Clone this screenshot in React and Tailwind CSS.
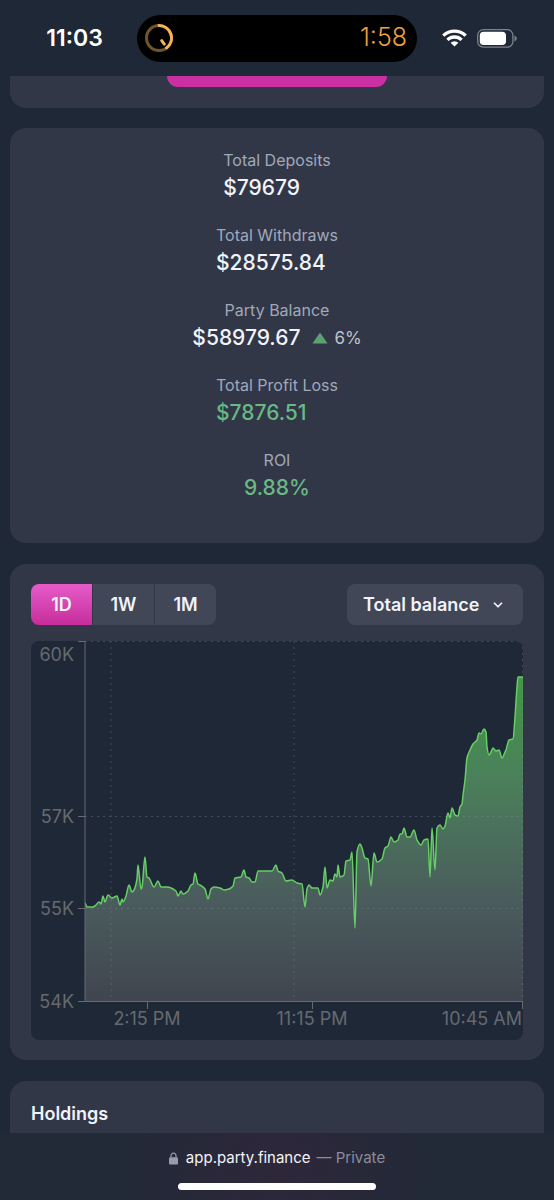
import { FiChevronDown } from 'react-icons/fi';

const stats = [
    { label: 'Total Deposits', value: '$79679' },
    { label: 'Total Withdraws', value: '$28575.84' },
    { label: 'Party Balance', value: '$58979.67', change: '6%', align: 'items-center' },
    { label: 'Total Profit Loss', value: '$7876.51', color: 'text-[#68b984]' },
    { label: 'ROI', value: '9.88%', color: 'text-[#68b984]', align: 'items-center' }
];

const ranges = ['1D', '1W', '1M'];

const yTicks = [
    { y: 0, label: '60K', labelY: 20 },
    { y: 175, label: '57K', labelY: 182 },
    { y: 267, label: '55K', labelY: 274 },
    { y: 360, label: '54K', labelY: 367 }
];

const xTicks = [
    { x: 116, label: '2:15 PM', anchor: 'middle' },
    { x: 281, label: '11:15 PM', anchor: 'middle' },
    { x: 491, label: '10:45 AM', anchor: 'end' }
];

const balance = [
    [54, 262], [56, 266], [62, 266], [65, 264], [68, 261], [70, 263], [72, 255], [74, 261],
    [77, 254], [81, 257], [86, 255], [89, 264], [91, 258], [92, 261], [95, 255], [98, 244],
    [101, 251], [103, 249], [106, 238], [107, 224], [110, 248], [111, 246], [114, 216],
    [116, 236], [118, 237], [123, 246], [127, 240], [130, 246], [136, 246], [145, 250],
    [147, 255], [150, 250], [152, 253], [157, 250], [160, 244], [162, 243], [164, 232],
    [167, 243], [169, 244], [174, 248], [177, 258], [180, 248], [183, 246], [189, 247],
    [193, 249], [198, 248], [202, 245], [204, 237], [210, 236], [213, 229], [215, 236],
    [218, 237], [221, 241], [224, 241], [227, 230], [241, 230], [245, 224], [247, 230],
    [251, 232], [255, 240], [261, 239], [266, 242], [271, 243], [274, 266], [276, 248],
    [278, 244], [281, 247], [287, 247], [289, 254], [292, 246], [294, 226], [296, 247],
    [299, 239], [302, 240], [304, 233], [306, 236], [307, 224], [309, 236], [313, 234],
    [315, 220], [319, 219], [321, 211], [324, 287], [326, 211], [329, 203], [331, 207],
    [334, 217], [337, 218], [340, 245], [343, 212], [346, 221], [351, 218], [354, 207],
    [357, 205], [360, 196], [363, 201], [367, 199], [369, 193], [371, 193], [373, 187],
    [376, 196], [379, 196], [383, 189], [386, 199], [390, 204], [393, 199], [397, 198],
    [399, 236], [401, 187], [404, 229], [406, 187], [409, 184], [412, 188], [414, 185],
    [417, 172], [419, 177], [421, 167], [424, 174], [427, 175], [429, 166], [431, 163],
    [432, 154], [434, 139], [436, 117], [439, 109], [442, 103], [446, 99], [448, 92],
    [450, 93], [453, 88], [455, 91], [456, 106], [458, 114], [460, 111], [462, 107],
    [465, 110], [468, 109], [471, 117], [474, 111], [475, 109], [478, 99], [482, 98],
    [484, 76], [486, 46], [487, 36], [492, 36]
];

// Monotone cubic through the points, so peaks never overshoot
const toPath = (points) => {
    const slope = (i) => (points[i + 1][1] - points[i][1]) / (points[i + 1][0] - points[i][0]);
    const tangents = points.map((_, i) => {
        if (i === 0 || i === points.length - 1) return 0;
        const a = slope(i - 1);
        const b = slope(i);
        return a * b <= 0 ? 0 : (2 * a * b) / (a + b);
    });

    let d = `M${points[0][0]},${points[0][1]}`;
    for (let i = 1; i < points.length; i++) {
        const [x0, y0] = points[i - 1];
        const [x1, y1] = points[i];
        const dx = (x1 - x0) / 3;
        d += `C${x0 + dx},${y0 + dx * tangents[i - 1]},${x1 - dx},${y1 - dx * tangents[i]},${x1},${y1}`;
    }
    return d;
};

const StatusBar = () => (
    <header className="grid h-[76px] shrink-0 grid-cols-[1fr_280px_1fr] items-center">

        <span className="pl-3 text-center text-[23px] font-semibold text-white">11:03</span>

        <div className="flex h-[47px] items-center justify-between rounded-full bg-black pl-2 pr-2.5">
            <svg width="28" height="28" viewBox="0 0 28 28" fill="none" strokeWidth="3">
                <circle cx="14" cy="14" r="12.5" stroke="#70552a" />
                <path d="M14 1.5A12.5 12.5 0 0 1 21.6 23.9" stroke="#f7b456" strokeLinecap="round" />
                <path d="M16.7 16.7l2.6 3.4" stroke="#f7b456" strokeLinecap="round" />
            </svg>
            <span className="text-[25px] font-light text-[#f0a13a]">1:58</span>
        </div>

        <div className="flex items-center justify-center gap-2.5 pr-3">
            <svg width="25" height="18" viewBox="0 0 25 18" fill="none" stroke="#fff" strokeWidth="3.3">
                <path d="M1.3 6.6a16 16 0 0 1 22.4 0" />
                <path d="M5.4 10.9a10.2 10.2 0 0 1 14.2 0" />
                <path d="M12.5 17.6l-3.9-3.8a5.6 5.6 0 0 1 7.8 0z" fill="#fff" stroke="none" />
            </svg>
            <svg width="40" height="19" viewBox="0 0 40 19">
                <rect x="0.7" y="0.7" width="35.2" height="17.4" rx="5.6" fill="none" stroke="#7d828b" strokeWidth="1.3" />
                <rect x="2.8" y="2.8" width="26.2" height="13.2" rx="3.8" fill="#fff" />
                <path d="M37.5 6.4q2.3 1 2.3 3t-2.3 3z" fill="#7d828b" />
            </svg>
        </div>

    </header>
);

const Stat = ({ label, value, change, color = 'text-[#f1f3fa]', align = 'items-start' }) => (
    <div className={`flex flex-col ${align}`}>
        <dt className="text-base leading-6 text-[#a0a8ba]">{label}</dt>
        <dd className={`flex items-center text-[21px] leading-8 font-medium ${color}`}>
            {value}
            {change && (
                <span className="ml-3 flex items-center gap-1.5 text-[17px] font-normal text-[#bfc3cc]">
                    <svg width="16" height="12" viewBox="0 0 16 12">
                        <path d="M8 0.5l7.5 11h-15z" fill="#5da173" />
                    </svg>
                    {change}
                </span>
            )}
        </dd>
    </div>
);

const BalanceChart = () => {

    const line = toPath(balance);

    return (
        <svg
            className="block h-auto w-full rounded-lg bg-[#1f2836]"
            viewBox="0 0 492 399"
            role="img"
            aria-label="Total balance over one day"
        >
            <defs>
                <linearGradient id="balanceFill" x1="0" y1="36" x2="0" y2="360" gradientUnits="userSpaceOnUse">
                    <stop offset="0" stopColor="#449846" />
                    <stop offset="0.3" stopColor="#4a815a" />
                    <stop offset="0.7" stopColor="#4a5b5d" />
                    <stop offset="1" stopColor="#40454f" />
                </linearGradient>
            </defs>

            <path d={`${line}V360H54Z`} fill="url(#balanceFill)" />

            {/* Grid */}
            <g stroke="#8a93a0" strokeOpacity="0.32" strokeDasharray="2 4">
                <path d="M54 0.5H492M54 175.5H492M54 267.5H492M80 0V360M263 0V360M491.5 0V360" />
            </g>

            <path d={line} fill="none" stroke="#67ce65" strokeWidth="1.5" strokeLinejoin="round" />

            {/* Axes */}
            <path d="M54 0V360M54 360.5H492" fill="none" stroke="#666b73" />

            <g fontFamily="Inter, sans-serif" fontSize="18" fill="#666a70">
                {yTicks.map((tick) => (
                    <g key={tick.label}>
                        <path d={`M47 ${tick.y + 0.5}h7`} stroke="#666b73" />
                        <text x="43" y={tick.labelY} textAnchor="end">{tick.label}</text>
                    </g>
                ))}
                {xTicks.map((tick) => (
                    <g key={tick.label}>
                        <path d={`M${tick.x + 0.5} 361v7`} stroke="#666b73" />
                        <text x={tick.x} y="384" textAnchor={tick.anchor}>{tick.label}</text>
                    </g>
                ))}
            </g>
        </svg>
    );

};

const App = () => {

    return (

        <div className="flex h-screen flex-col bg-[#1f2836] font-['Inter',sans-serif]">

            <StatusBar />

            <main className="flex min-h-0 flex-1 flex-col gap-[21px] overflow-y-auto px-2.5 [scrollbar-width:none]">

                <section className="-mb-px h-8 shrink-0 rounded-b-2xl bg-[#313747]">
                    <button
                        type="button"
                        aria-label="Deposit"
                        className="mx-auto block h-[11px] w-[220px] rounded-b-xl bg-[#cb30a2]"
                    />
                </section>

                {/* Party totals */}
                <section className="shrink-0 rounded-2xl bg-[#313747] pt-5 pb-[39px]">
                    <dl className="flex flex-col items-center gap-[19px]">
                        {stats.map((stat) => (
                            <Stat key={stat.label} {...stat} />
                        ))}
                    </dl>
                </section>

                {/* Chart */}
                <section className="flex shrink-0 flex-col gap-4 rounded-2xl bg-[#313747] px-[21px] py-5">

                    <div className="flex items-center justify-between">

                        <div className="flex gap-px overflow-hidden rounded-lg">
                            {ranges.map((range) => (
                                <button
                                    key={range}
                                    type="button"
                                    className={`h-[41px] w-[61px] text-lg font-semibold text-[#f1f3fa]
                                    ${range === '1D'
                                            ? 'bg-linear-to-b from-[#e65bc9] to-[#c62c9b]'
                                            : 'bg-[#414757]'
                                        }`}
                                >
                                    {range}
                                </button>
                            ))}
                        </div>

                        <div className="relative">
                            <select
                                aria-label="Chart value"
                                className="h-[41px] w-44 appearance-none rounded-lg bg-[#414757] pl-4 text-lg font-semibold text-[#f1f3fa]"
                            >
                                <option>Total balance</option>
                            </select>
                            <FiChevronDown
                                size={14}
                                strokeWidth={3}
                                className="pointer-events-none absolute top-3.5 right-[18px] text-[#f1f3fa]"
                            />
                        </div>

                    </div>

                    <BalanceChart />

                </section>

                <section className="min-h-[120px] shrink-0 rounded-2xl bg-[#313747] p-[21px]">
                    <h2 className="text-lg leading-6 font-semibold text-[#f1f3fa]">Holdings</h2>
                </section>

            </main>

            {/* Browser bar */}
            <footer className="flex h-[67px] shrink-0 flex-col items-center justify-between bg-[#222937] bg-[radial-gradient(ellipse_150px_120px_at_center,#2f273b,#222937)] pt-[11px] pb-2.5">
                <p className="flex items-center text-[15px] leading-7 text-[#8b8d9c]">
                    <svg className="mr-2" width="9" height="13" viewBox="0 0 9 13">
                        <rect y="5.2" width="9" height="7.3" rx="1.3" fill="#9a9ba9" />
                        <path d="M2 5.5V3.6a2.5 2.5 0 0 1 5 0v1.9" fill="none" stroke="#9a9ba9" strokeWidth="1.2" />
                    </svg>
                    <span className="mr-1.5 text-[#f4f4f7]">app.party.finance</span>
                    — Private
                </p>
                <div className="h-[7px] w-[198px] rounded-full bg-white" />
            </footer>

        </div>

    );

};

export default App;
